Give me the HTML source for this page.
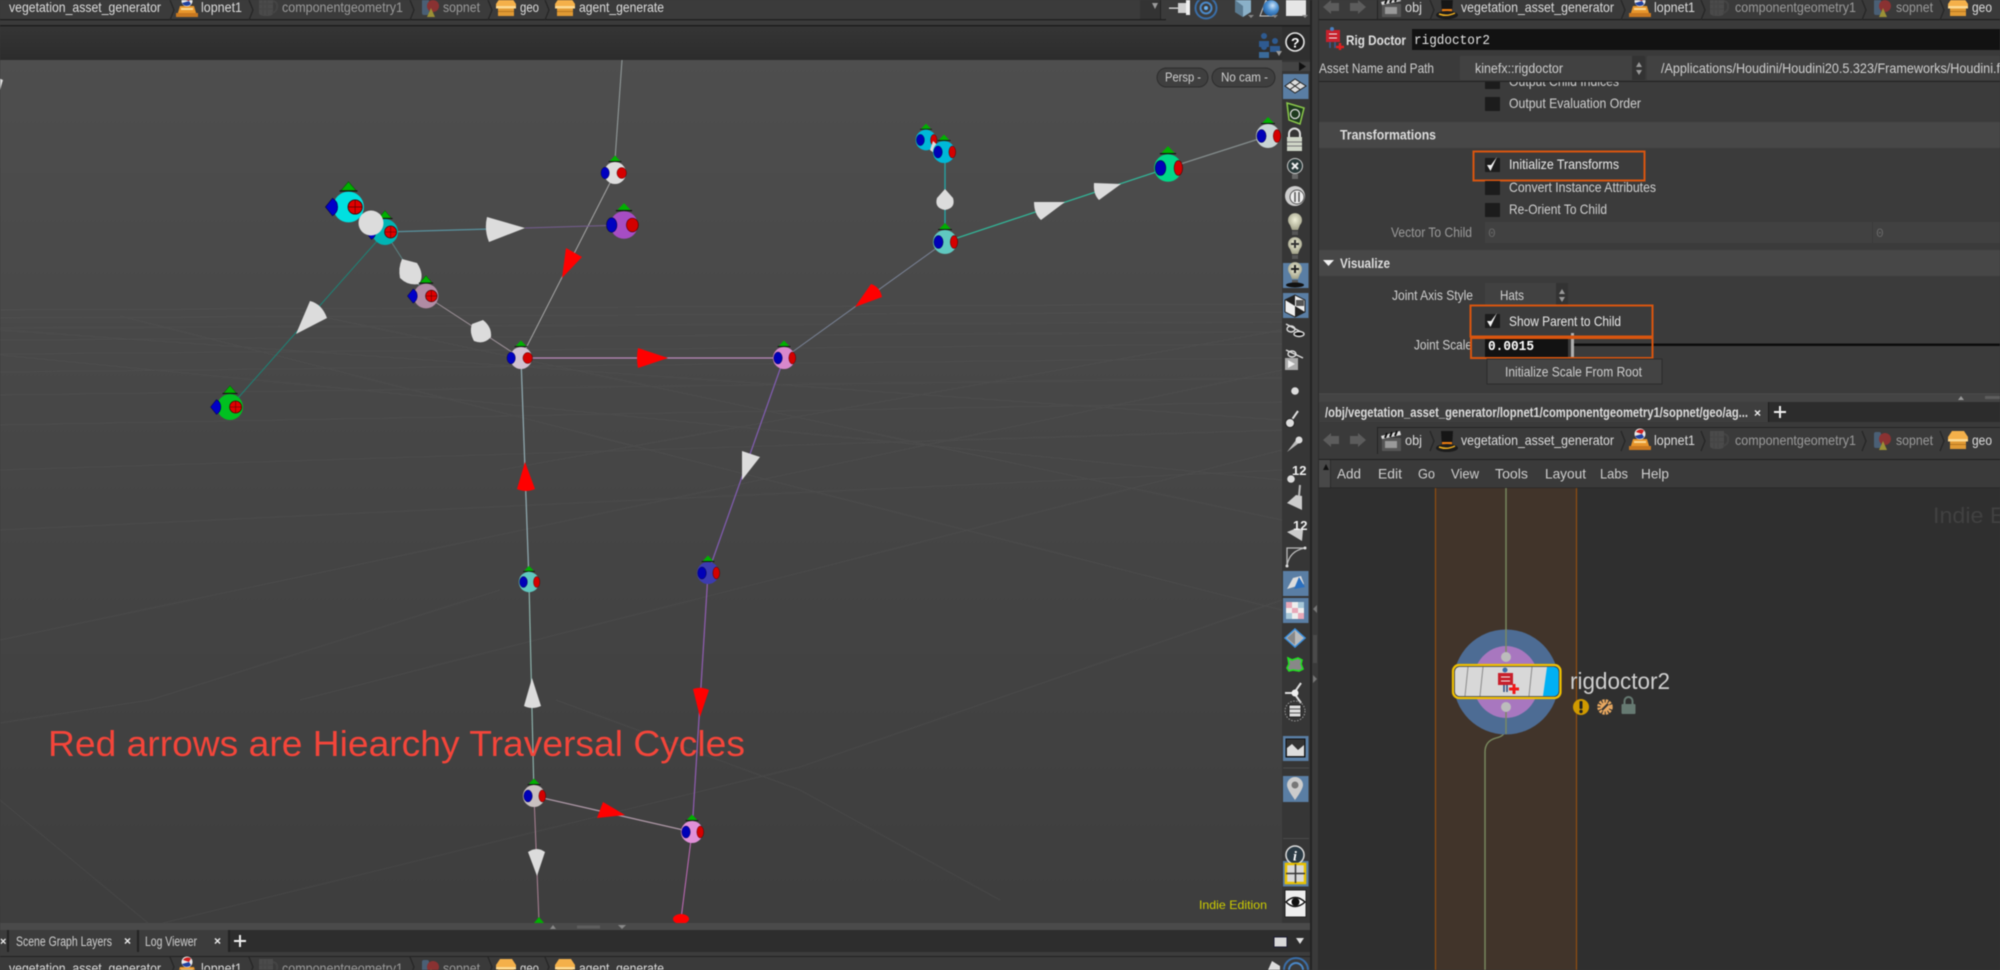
<!DOCTYPE html>
<html><head><meta charset="utf-8"><title>Rig Doctor</title>
<style>
html,body{margin:0;padding:0;background:#3a3a3a;width:2000px;height:970px;overflow:hidden}
body>svg{display:block;position:absolute;left:0;top:0;filter:blur(.45px)}
text{font-family:"Liberation Sans",sans-serif;fill:#cfcfcf;font-size:14px}
.b{fill:#dcdcdc}.d{fill:#9a9a9a}.m{font-family:"Liberation Mono",monospace}
</style></head><body>
<svg width="2000" height="970" viewBox="0 0 2000 970" xmlns="http://www.w3.org/2000/svg">
<defs>
<linearGradient id="vp" x1="0" y1="0" x2="0" y2="1"><stop offset="0" stop-color="#4e4e4e"/><stop offset=".35" stop-color="#484848"/><stop offset="1" stop-color="#3e3e3e"/></linearGradient>
<linearGradient id="tb" x1="0" y1="0" x2="0" y2="1"><stop offset="0" stop-color="#353535"/><stop offset="1" stop-color="#2c2c2c"/></linearGradient>
<radialGradient id="bulb" cx=".5" cy=".4" r=".6"><stop offset="0" stop-color="#f0f0d8"/><stop offset="1" stop-color="#a0a088"/></radialGradient>
<radialGradient id="sph" cx=".6" cy=".35" r=".7"><stop offset="0" stop-color="#cfe4f8"/><stop offset=".5" stop-color="#4a8ed0"/><stop offset="1" stop-color="#1f5a9a"/></radialGradient>
<!-- joint variants: radius 12 units -->
<g id="ja">
<path d="M-6-12.800L0-19.800 6-12.800Z" fill="#00b000" stroke="#0a5a0a" stroke-width=".5"/>
<path d="M-7-12.500H7" stroke="#111" stroke-width="1"/>
<circle r="12" fill="currentColor"/>
<path d="M-18 0L-12.500-6.800Q-8.500-4.500-8.500 0Q-8.500 4.500-12.500 6.800Z" fill="#0000c8" stroke="#000050" stroke-width=".5"/>
<circle cx="5.200" r="5.600" fill="#e00000" stroke="#300" stroke-width=".6"/>
<path d="M-.400 0H10.800M5.200-5.600V5.600" stroke="#500" stroke-width=".5"/>
</g>
<g id="jc">
<path d="M-6-12.800L0-19 6-12.800Z" fill="#00b000"/>
<path d="M-7-12.500H7" stroke="#111" stroke-width="1"/>
<circle r="12" fill="currentColor"/>
<ellipse cx="-10.700" rx="4.500" ry="6.300" fill="#0000c0" stroke="#000040" stroke-width=".5"/>
<ellipse cx="7.300" rx="5.200" ry="6" fill="#d40000" stroke="#400" stroke-width=".5"/>
</g>
<g id="jb">
<path d="M-6-12.800L0-19 6-12.800Z" fill="#00b000"/>
<path d="M-7-12.500H7" stroke="#111" stroke-width="1"/>
<circle r="12" fill="currentColor"/>
<ellipse cx="-6.500" rx="4.600" ry="6.500" fill="#0000b8" stroke="#000040" stroke-width=".5"/>
<ellipse cx="9" rx="3.700" ry="6.500" fill="#d40000" stroke="#400" stroke-width=".5"/>
</g>
<!-- breadcrumb icons -->
<g id="igeo"><path d="M-10-3L-6-9H6L10-3V0H-10Z" fill="#f4b04a"/><rect x="-8" y="0" width="16" height="9" fill="#e09a34"/><rect x="-10" y="-1" width="20" height="2.500" fill="#fcd890"/><rect x="-8" y="4" width="16" height="1" fill="#b87820"/></g>
<g id="ilop"><path d="M-10 9L-7-1H7L10 9Z" fill="#e8962c"/><rect x="-11" y="6" width="22" height="4" fill="#c87820"/><rect x="-6" y="1" width="12" height="2" fill="#fbd890"/><circle cy="-6" r="5.500" fill="#e8e8e8"/><path d="M-4-8A5.500 5.500 0 0 1 4-9.500L2-6Z" fill="#d02020"/><path d="M-5-4A5.500 5.500 0 0 0 4-3L2-6Z" fill="#2040a0"/></g>
<g id="imug"><path d="M-8-9H6V6Q6 9 0 9Q-8 9-8 6Z" fill="#4a4a4a"/><path d="M6-6Q11-5 10 1Q9 5 5 6" fill="none" stroke="#444" stroke-width="2"/><path d="M-4-8V8M0-8V8M-8-3H6M-8 2H6" stroke="#444"/></g>
<g id="isop"><rect x="-8" y="-8" width="7" height="16" rx="2" fill="#4a5f75"/><circle cx="3" cy="-1" r="6" fill="#8a3232"/><path d="M-3 10L1 1 5 10Z" fill="#9a9036"/></g>
<g id="iobj"><rect x="-9" y="-3" width="19" height="13" fill="#555"/><path d="M-10-5L9-10 10-6-9-2Z" fill="#ddd"/><path d="M-6-3L-4-8M-1-4L1-9M4-5L6-10" stroke="#111" stroke-width="2"/><rect x="-6" y="0" width="12" height="7" fill="#999"/></g>
<g id="ihat"><path d="M-5-10H7L6 7H-4Z" fill="#161616"/><path d="M-4 1H6L6 5H-4Z" fill="#e87a10"/><ellipse cx="1" cy="7" rx="11" ry="4" fill="#1c1c1c"/><path d="M-7 6Q1 9 9 5" stroke="#f0b020" fill="none" stroke-width="1.500"/></g>
<g id="lbulb"><path d="M-5 1A7 7 0 1 1 5 1L3 6H-3Z" fill="url(#bulb)"/><rect x="-3" y="7" width="6" height="4" fill="#555"/></g>
<path id="chev" d="M0 0L4 10 0 20" fill="none" stroke="#262626" stroke-width="1.300"/>
<path id="chk" d="M-5 0L-1.500 6 5-8-1 0Z" fill="#f0f0f0"/>
</defs>

<!-- base -->
<rect width="2000" height="970" fill="#3a3a3a"/>
<rect x="0" y="0" width="1310" height="20" fill="#3b3b3b"/>
<rect x="0" y="19" width="1166" height="1.300" fill="#1f1f1f"/>
<rect x="1160" y="0" width="1" height="19" fill="#222"/>
<rect x="1140" y="0" width="20" height="19" fill="#333"/>
<rect x="0" y="25" width="1310" height="1.500" fill="#1e1e1e"/>
<rect x="0" y="26.500" width="1282" height="33.500" fill="url(#tb)"/>
<rect x="1282" y="26.500" width="28" height="33.500" fill="#2f2f2f"/>

<!-- viewport -->
<rect x="0" y="60" width="1282" height="863" fill="url(#vp)"/>
<g stroke="#5a5a5a" stroke-width="1" fill="none" opacity=".3">
<path d="M0 723L150 700 500 590M0 800L148 923M163 923L800 767 1282 600M556 700L800 790 1000 900"/>
<path d="M0 310L1282 304M0 318L1282 312M0 328L1282 322M0 340L1282 332M0 354L1282 344M0 372L1282 358M0 395L1282 378M0 425L1282 402M0 470L1282 430M0 530L1282 470"/>
<path d="M0 330L1282 420M0 355L1282 480M120 316L1282 610M300 312L1282 520M1282 330L500 470M1282 370L0 640M1282 450L300 700"/>
</g>
<!-- skeleton lines -->
<g fill="none" stroke-width="1" opacity=".9">
<path d="M622 60L615 160" stroke="#9fa8a8"/>
<path d="M615 173L521 358" stroke="#b0b0b0"/>
<path d="M624 225L525 228" stroke="#7a5f98"/>
<path d="M490 229L385 232" stroke="#5a9aa8" stroke-width="1.300"/>
<path d="M385 232L230 407" stroke="#188a7c"/>
<path d="M385 232L426 296" stroke="#5f8a8a"/>
<path d="M426 296L521 358" stroke="#a89aa2"/>
<path d="M521 358L784 358" stroke="#c890c8" stroke-width="1.300"/>
<path d="M784 358L708 573" stroke="#8a60c0" stroke-width="1.200"/>
<path d="M708 573L692 832" stroke="#9a60c0" stroke-width="1.200"/>
<path d="M692 832L681 919" stroke="#d070c8"/>
<path d="M521 358L529 582" stroke="#9ab8c0" stroke-width="1.200"/>
<path d="M529 582L534 796" stroke="#9ac8c0" stroke-width="1.100"/>
<path d="M534 796L692 832" stroke="#b8a0b0" stroke-width="1.300"/>
<path d="M534 796L539 922" stroke="#b88aa0"/>
<path d="M945 242L784 358" stroke="#7f8aa0"/>
<path d="M945 152V242" stroke="#20b0b0" stroke-width="1.300"/>
<path d="M945 242L1168 168" stroke="#30c0a0" stroke-width="1.300"/>
<path d="M1168 168L1268 136" stroke="#8a9494" stroke-width="1.300"/>
</g>
<!-- arrows -->
<g fill="#dcdcdc">
<path d="M525 228L487 217Q484 230 489 242Z"/>
<path d="M296 334L310 301Q322 304 327 318Z"/>
<path d="M402 259L417 263Q425 275 419 284Q408 286 400 278Q398 268 402 259Z"/>
<path d="M483 320Q492 327 491 337Q484 345 474 341Q469 332 472 324Z"/>
<path d="M742 451L760 457 742 480Z"/>
<path d="M532 678L524 706Q532 710 541 706Z"/>
<path d="M537 876L528 852Q537 846 545 852Z"/>
<path d="M945 189L953 198Q956 208 945 210Q934 208 937 198Z"/>
<path d="M1065 202L1034 202Q1034 214 1041 220Z"/>
<path d="M1121 184L1094 183Q1093 194 1099 200Z"/>
</g>
<g fill="#ff0000">
<path d="M562 278L566 248 582 257Z"/>
<path d="M668 358L638 348Q636 358 638 368Z"/>
<path d="M525 462L517 489Q526 493 535 489Z"/>
<path d="M700 717L693 689Q701 686 709 690Z"/>
<path d="M625 815L603 802 597 818Z"/>
<path d="M855 307L871 284Q880 287 882 297Z"/>
<ellipse cx="681" cy="919" rx="8" ry="5"/>
</g>
<path d="M539 917L544 923H534Z" fill="#00b000"/>
<!-- joints -->
<use href="#ja" transform="translate(348.500 207) scale(1.280)" color="#00e0e0"/>
<use href="#ja" transform="translate(385 232) scale(1.080)" color="#00b4b4"/>
<circle cx="371" cy="223" r="12.500" fill="#dcdcdc"/>
<use href="#jc" transform="translate(615 173) scale(.92)" color="#dcdcdc"/>
<use href="#jc" transform="translate(624 225) scale(1.150)" color="#a64dc4"/>
<use href="#ja" transform="translate(426 296) scale(1.030)" color="#b08ca4"/>
<use href="#ja" transform="translate(230 407) scale(1.080)" color="#00c020"/>
<use href="#jc" transform="translate(521 358) scale(.92)" color="#d0c0d0"/>
<use href="#jb" transform="translate(784 358) scale(.92)" color="#d888cc"/>
<use href="#jb" transform="translate(926 140) scale(.86)" color="#00b8d8"/>
<path d="M933 141L945 152 938 156 930 150Z" fill="#dcdcdc"/>
<use href="#jb" transform="translate(944 152) scale(.92)" color="#00b8d8"/>
<use href="#jb" transform="translate(945 242) scale(1)" color="#60c8c0"/>
<use href="#jb" transform="translate(1168 168) scale(1.150)" color="#00d888"/>
<use href="#jb" transform="translate(1268 136) scale(1)" color="#c8d4d4"/>
<use href="#jb" transform="translate(529 582) scale(.85)" color="#60c8c0"/>
<use href="#jb" transform="translate(708 573) scale(.92)" color="#3c3cb0"/>
<use href="#jb" transform="translate(534 796) scale(.92)" color="#c8c0c0"/>
<use href="#jb" transform="translate(692 832) scale(.92)" color="#e090d8"/>

<text x="48" y="756" style="font-size:36px;fill:#f4453a" textLength="697" lengthAdjust="spacingAndGlyphs">Red arrows are Hiearchy Traversal Cycles</text>
<text x="1199" y="909" style="font-size:12px;fill:#cccc00" textLength="68" lengthAdjust="spacingAndGlyphs">Indie Edition</text>

<!-- persp buttons -->
<rect x="1157" y="68" width="51" height="19" rx="9.500" fill="#3f3f3f" stroke="#2c2c2c"/>
<text x="1165" y="81.500" style="font-size:13px" textLength="36" lengthAdjust="spacingAndGlyphs">Persp -</text>
<rect x="1212" y="68" width="63" height="19" rx="9.500" fill="#3f3f3f" stroke="#2c2c2c"/>
<text x="1221" y="81.500" style="font-size:13px" textLength="47" lengthAdjust="spacingAndGlyphs">No cam -</text>
<path d="M0 82L5 84 2 94Z" fill="#ddd" transform="translate(-2 -4)"/>

<!-- top breadcrumb left -->
<g>
<text x="9" y="12" class="b" textLength="152" lengthAdjust="spacingAndGlyphs">vegetation_asset_generator</text>
<use href="#chev" x="170" y="0"/>
<use href="#ilop" x="187" y="7"/>
<text x="201" y="12" class="b" textLength="41" lengthAdjust="spacingAndGlyphs">lopnet1</text>
<use href="#chev" x="249" y="0"/>
<use href="#imug" x="267" y="7"/>
<text x="282" y="12" class="d" textLength="121" lengthAdjust="spacingAndGlyphs">componentgeometry1</text>
<use href="#chev" x="410" y="0"/>
<use href="#isop" x="430" y="7"/>
<text x="443" y="12" class="d" textLength="37" lengthAdjust="spacingAndGlyphs">sopnet</text>
<use href="#chev" x="488" y="0"/>
<use href="#igeo" x="506" y="7"/>
<text x="520" y="12" class="b" textLength="19" lengthAdjust="spacingAndGlyphs">geo</text>
<use href="#chev" x="545" y="0"/>
<use href="#igeo" x="565" y="7"/>
<text x="579" y="12" class="b" textLength="85" lengthAdjust="spacingAndGlyphs">agent_generate</text>
</g>
<path d="M1152 3H1158L1155 9Z" fill="#9a9a9a"/>
<!-- top right icons -->
<path d="M1169 7.500H1178V8.800H1169Z" fill="#ddd"/><rect x="1178" y="3" width="8" height="10" fill="#cfcfcf"/><rect x="1186" y="0" width="4" height="15" fill="#eee"/>
<circle cx="1206" cy="8" r="10.500" fill="none" stroke="#3a6ea8" stroke-width="2"/><circle cx="1206" cy="8" r="5.500" fill="none" stroke="#4a88c8" stroke-width="2"/><circle cx="1206" cy="8" r="2" fill="#6ab0f0"/>
<path d="M1235 0H1251V12L1243 17 1235 12Z" fill="#8ab0c8"/><path d="M1243 6V17L1235 12V0Z" fill="#5a7a90"/>
<path d="M1260 16L1266 0 1274 16Z" fill="none" stroke="#ccc"/><circle cx="1271" cy="8" r="8" fill="url(#sph)"/>
<rect x="1286" y="0" width="20" height="16" fill="#e6e6e6"/>
<path d="M1248 15H1254L1251 18ZM1272 15H1278L1275 18ZM1302 15H1308L1305 18Z" fill="#888"/>
<!-- viewport toolbar icons -->
<g fill="#2e5a90"><circle cx="1264" cy="36" r="3"/><path d="M1259 47H1269V41H1259Z"/><circle cx="1275" cy="41" r="3"/><path d="M1270 52H1280V46H1270Z"/><circle cx="1264" cy="47" r="3"/><path d="M1259 58H1269V52H1259Z" fill="#3a6a9a"/></g>
<path d="M1276 51H1282L1279 56Z" fill="#999"/>
<circle cx="1295" cy="42" r="9" fill="#1d1d1d" stroke="#e6e6e6" stroke-width="1.600"/>
<text x="1291" y="47.500" style="font-size:14px;font-weight:bold;fill:#fff">?</text>

<!-- right toolbar -->
<rect x="1282" y="60" width="28" height="863" fill="#363636"/>
<rect x="1282" y="62" width="28" height="9" fill="#444"/>
<path d="M1299 62L1306 66.500 1299 71Z" fill="#111"/>
<rect x="1310" y="0" width="2" height="970" fill="#232323"/>
<rect x="1312" y="0" width="7" height="970" fill="#3a3a3a"/>
<rect x="1318" y="0" width="1" height="970" fill="#2c2c2c"/>
<g fill="#5a7ea4">
<rect x="1283" y="74" width="25.500" height="25"/>
<rect x="1283" y="263" width="25.500" height="25"/>
<rect x="1283" y="293" width="25.500" height="25"/>
<rect x="1283" y="571" width="25.500" height="25"/>
<rect x="1283" y="598" width="25.500" height="25"/>
<rect x="1283" y="736" width="25.500" height="25"/>
<rect x="1283" y="776" width="25.500" height="26"/>
<rect x="1283" y="861" width="25.500" height="25.500"/>
</g>
<path d="M1285 86L1295 79 1306 86 1295 93Z" fill="#ddd" stroke="#222"/><path d="M1290 82.500L1300 89.500M1300 82.500L1290 89.500" stroke="#222"/>
<path d="M1287 103L1304 108 1300 124 1289 120Z" fill="#1e3a1e" stroke="#8ac84a" stroke-width="1.500"/><circle cx="1295" cy="114" r="4.500" fill="none" stroke="#ddd" stroke-width="1.300"/>
<path d="M1289 138V134A5.500 5.500 0 0 1 1300 134V138" fill="none" stroke="#ddd" stroke-width="2"/><rect x="1287" y="137" width="15" height="14" fill="#cfd6c8"/><path d="M1287 142H1302M1287 146H1302" stroke="#777"/>
<circle cx="1295" cy="166" r="7.500" fill="#2a3a3a" stroke="#ccc"/><path d="M1292 163L1298 169M1298 163L1292 169" stroke="#eee" stroke-width="2"/><rect x="1292" y="174" width="6" height="5" fill="#666"/>
<circle cx="1295" cy="196" r="10" fill="#ccc"/><circle cx="1297" cy="197" r="7" fill="#eee" stroke="#555"/><path d="M1295 192V202M1299 192V202" stroke="#555" stroke-width="1.500"/>
<use href="#lbulb" x="1295" y="224"/>
<use href="#lbulb" x="1295" y="248"/><path d="M1295 240V248M1291 244H1299" stroke="#333" stroke-width="2"/>
<use href="#lbulb" x="1295" y="273"/><path d="M1295 265V273M1291 269H1299" stroke="#222" stroke-width="2"/><ellipse cx="1295" cy="285" rx="9" ry="2.500" fill="#111"/>
<path d="M1285 300L1295 295 1305 300V312L1295 317 1285 312Z" fill="#eee" stroke="#222"/><path d="M1295 295V306L1285 300ZM1295 306L1305 312 1295 317Z" fill="#222"/><rect x="1296" y="300" width="8" height="6" fill="#555"/>
<g fill="none" stroke="#ddd" stroke-width="1.400"><path d="M1286 324L1303 333"/><ellipse cx="1291" cy="329" rx="4" ry="3"/><ellipse cx="1299" cy="334" rx="5" ry="2.500" fill="#111"/><path d="M1286 350L1303 358"/><ellipse cx="1292" cy="354" rx="4" ry="3"/></g>
<rect x="1285" y="358" width="13" height="12" fill="#aaa"/><path d="M1288 360L1295 364 1288 368Z" fill="#eee"/>
<circle cx="1295" cy="391" r="3.800" fill="#ddd"/>
<path d="M1298 411L1291 421" stroke="#ddd" stroke-width="2"/><circle cx="1290" cy="423" r="4.500" fill="#ddd" stroke="#222"/>
<path d="M1287 452L1296 440 1299 443Z" fill="#bbb"/><circle cx="1299" cy="440" r="3.500" fill="#ddd"/>
<circle cx="1291" cy="479" r="3.800" fill="#ddd"/><text x="1292" y="475" style="font-size:13px;font-weight:bold;fill:#eee">12</text>
<path d="M1287 503L1296 495 1302 496 1302 510Z" fill="#ccc"/><path d="M1299 496L1300 485" stroke="#bbb" stroke-width="2"/>
<path d="M1287 532L1297 528 1303 530 1302 541Z" fill="#ccc"/><text x="1293" y="530" style="font-size:13px;font-weight:bold;fill:#eee">12</text>
<path d="M1287 566V548H1305M1287 566Q1289 551 1305 548" fill="none" stroke="#bbb" stroke-width="1.300"/><circle cx="1287" cy="566" r="1.500" fill="#ddd"/><circle cx="1305" cy="548" r="1.500" fill="#ddd"/>
<path d="M1287 589L1293 578 1301 576 1304 584Z" fill="#dcdcdc"/><path d="M1299 577L1305 587 1294 589Z" fill="#2a70c0"/>
<g><rect x="1286" y="602" width="18" height="17" fill="#eee"/><rect x="1286" y="602" width="6" height="6" fill="#e8a8b8"/><rect x="1298" y="602" width="6" height="6" fill="#a8c8d8"/><rect x="1292" y="608" width="6" height="5" fill="#e8a8b8"/><rect x="1286" y="613" width="6" height="6" fill="#a8c8d8"/><rect x="1298" y="613" width="6" height="6" fill="#e8a8b8"/></g>
<path d="M1295 629L1305 638 1295 647 1285 638Z" fill="#bbb" stroke="#3a90e0" stroke-width="1.500"/><path d="M1295 631L1295 645 1287 638Z" fill="#888"/>
<path d="M1288 658L1292 660 1298 658 1302 660 1301 664 1303 669 1299 671 1293 670 1289 671 1287 668 1289 664Z" fill="#888" stroke="#20e020" stroke-width="1.600"/>
<path d="M1294 693L1301 683M1294 693L1301 703M1294 693H1285" stroke="#ddd" stroke-width="2"/><circle cx="1295" cy="693" r="3.500" fill="#eee"/>
<circle cx="1295" cy="711" r="10" fill="none" stroke="#999" stroke-dasharray="1.500 1.500"/><rect x="1289" y="705" width="12" height="12" fill="#ddd" stroke="#222"/><path d="M1289 709H1301M1289 713H1301" stroke="#555"/>
<rect x="1286" y="739" width="19" height="18" fill="#333" stroke="#111"/><path d="M1287 756V748L1292 744 1298 750 1304 745V756Z" fill="#ddd"/>
<rect x="1283" y="767.500" width="26" height="1" fill="#4a4a4a"/>
<path d="M1295 800Q1287 789 1287 785A8 8 0 0 1 1303 785Q1303 789 1295 800Z" fill="#ccc"/><circle cx="1295" cy="785" r="3.500" fill="#777"/>
<rect x="1283" y="838" width="26" height="1" fill="#4a4a4a"/>
<circle cx="1295" cy="855" r="9" fill="#2a3a44" stroke="#ddd" stroke-width="1.500"/>
<text x="1293" y="860.500" style="font-size:14px;font-style:italic;font-weight:bold;font-family:'Liberation Serif',serif;fill:#fff">i</text>
<rect x="1286" y="864" width="19" height="19" fill="#d8d8d8" stroke="#e8c000" stroke-width="2.500"/><path d="M1295.500 864V883M1286 873.500H1305" stroke="#333" stroke-width="1.500"/>
<rect x="1285" y="890" width="21" height="27" fill="#eee" stroke="#222"/><path d="M1286 902Q1295 893 1305 902Q1295 911 1286 902Z" fill="#fff" stroke="#111" stroke-width="1.500"/><circle cx="1295.500" cy="902" r="4" fill="#111"/>

<!-- sash small arrows -->
<path d="M1313 609L1317 605V613Z" fill="#777"/><path d="M1317 679L1313 675V683Z" fill="#777"/>
<rect x="1313" y="635" width="4" height="28" fill="#4a4a4a"/>

<!-- bottom left tabs -->
<rect x="0" y="923" width="1310" height="7" fill="#4a4a4a"/>
<path d="M553 925L556 929H550ZM618 925H626L622 929Z" fill="#888"/><rect x="577" y="925.500" width="23" height="3" fill="#5e5e5e"/>
<rect x="0" y="930" width="1310" height="22" fill="#2d2d2d"/>
<rect x="0" y="930" width="230" height="22" fill="#3c3c3c"/>
<rect x="7" y="930" width="2" height="22" fill="#222"/><rect x="137" y="930" width="2" height="22" fill="#222"/><rect x="228" y="930" width="2" height="22" fill="#222"/>
<text x="0" y="945" style="font-size:11px;font-weight:bold;fill:#eee">×</text>
<text x="16" y="946" style="font-size:13.500px" textLength="96" lengthAdjust="spacingAndGlyphs">Scene Graph Layers</text>
<text x="124" y="945" style="font-size:12px;font-weight:bold;fill:#eee">×</text>
<text x="145" y="946" style="font-size:13.500px" textLength="52" lengthAdjust="spacingAndGlyphs">Log Viewer</text>
<text x="214" y="945" style="font-size:12px;font-weight:bold;fill:#eee">×</text>
<path d="M240 935V947M234 941H246" stroke="#eee" stroke-width="2"/>
<rect x="1274" y="937" width="13" height="10" fill="#d8d8d8" stroke="#1a1a30"/>
<path d="M1296 938H1304L1300 944Z" fill="#ddd"/>
<rect x="0" y="952" width="1310" height="4" fill="#3c3c3c"/><rect x="0" y="956" width="1310" height="1" fill="#222"/>
<!-- bottom breadcrumb -->
<text x="9" y="973" class="b" textLength="152" lengthAdjust="spacingAndGlyphs">vegetation_asset_generator</text>
<use href="#chev" x="170" y="957"/><use href="#ilop" x="187" y="968"/>
<text x="201" y="973" class="b" textLength="41" lengthAdjust="spacingAndGlyphs">lopnet1</text>
<use href="#chev" x="249" y="957"/><use href="#imug" x="267" y="968"/>
<text x="282" y="973" class="d" textLength="121" lengthAdjust="spacingAndGlyphs">componentgeometry1</text>
<use href="#chev" x="410" y="957"/><use href="#isop" x="430" y="968"/>
<text x="443" y="973" class="d" textLength="37" lengthAdjust="spacingAndGlyphs">sopnet</text>
<use href="#chev" x="488" y="957"/><use href="#igeo" x="506" y="968"/>
<text x="520" y="973" class="b" textLength="19" lengthAdjust="spacingAndGlyphs">geo</text>
<use href="#chev" x="545" y="957"/><use href="#igeo" x="565" y="968"/>
<text x="579" y="973" class="b" textLength="85" lengthAdjust="spacingAndGlyphs">agent_generate</text>
<circle cx="1296" cy="970" r="12" fill="none" stroke="#3a6ea8" stroke-width="2"/><circle cx="1296" cy="970" r="7" fill="none" stroke="#4a88c8" stroke-width="2"/>
<path d="M1268 970L1272 961 1280 966V970Z" fill="#ddd"/>

<!-- ===== PARAM PANE ===== -->
<rect x="1319" y="0" width="681" height="394" fill="#3b3b3b"/>
<rect x="1377" y="0" width="623" height="19" fill="#3a3a3a"/>
<rect x="1319" y="19" width="681" height="1.300" fill="#1f1f1f"/>
<rect x="1319" y="20.300" width="681" height="61" fill="#3a3a3a"/>
<rect x="1377" y="0" width="1" height="19" fill="#222"/>
<g fill="#5c5c5c"><path d="M1323 7L1331 0V3H1339V11H1331V14Z"/><path d="M1366 7L1358 0V3H1350V11H1358V14Z"/></g>
<use href="#iobj" x="1391" y="7"/>
<text x="1405" y="12" class="b" textLength="17" lengthAdjust="spacingAndGlyphs">obj</text>
<use href="#chev" x="1430" y="0"/><use href="#ihat" x="1446" y="8"/>
<text x="1461" y="12" class="b" textLength="153" lengthAdjust="spacingAndGlyphs">vegetation_asset_generator</text>
<use href="#chev" x="1621" y="0"/><use href="#ilop" x="1640" y="7"/>
<text x="1654" y="12" class="b" textLength="41" lengthAdjust="spacingAndGlyphs">lopnet1</text>
<use href="#chev" x="1701" y="0"/><use href="#imug" x="1718" y="7"/>
<text x="1735" y="12" class="d" textLength="121" lengthAdjust="spacingAndGlyphs">componentgeometry1</text>
<use href="#chev" x="1862" y="0"/><use href="#isop" x="1882" y="7"/>
<text x="1896" y="12" class="d" textLength="37" lengthAdjust="spacingAndGlyphs">sopnet</text>
<use href="#chev" x="1940" y="0"/><use href="#igeo" x="1958" y="7"/>
<text x="1972" y="12" class="b" textLength="20" lengthAdjust="spacingAndGlyphs">geo</text>

<!-- Rig doctor header -->
<rect x="1326" y="30" width="14" height="12" fill="#c8202c"/><path d="M1329 34H1337M1329 38H1337" stroke="#eee"/><circle cx="1332" cy="29" r="2" fill="#4a80c0"/><path d="M1330 42V48M1335 42V48" stroke="#3a5a90" stroke-width="1.500"/><path d="M1340 43V50M1336 47H1344" stroke="#e02020" stroke-width="2.500"/>
<text x="1346" y="45" style="font-size:14px;font-weight:bold;fill:#e0e0e0" textLength="60" lengthAdjust="spacingAndGlyphs">Rig Doctor</text>
<rect x="1412" y="29" width="588" height="21" fill="#121212"/>
<text x="1414" y="44" class="m" style="font-size:14px;fill:#e4e4e4" textLength="76" lengthAdjust="spacingAndGlyphs">rigdoctor2</text>
<text x="1319" y="73" style="font-size:14px" textLength="115" lengthAdjust="spacingAndGlyphs">Asset Name and Path</text>
<rect x="1460" y="56" width="172" height="24" fill="#414141"/>
<rect x="1632" y="56" width="13" height="24" fill="#333"/>
<path d="M1639 62L1642 67H1636ZM1639 75L1636 70H1642Z" fill="#999"/>
<rect x="1647" y="56" width="353" height="24" fill="#414141"/>
<text x="1475" y="73" style="font-size:14px" textLength="88" lengthAdjust="spacingAndGlyphs">kinefx::rigdoctor</text>
<text x="1661" y="73" style="font-size:14px" textLength="339" lengthAdjust="spacingAndGlyphs">/Applications/Houdini/Houdini20.5.323/Frameworks/Houdini.f</text>
<rect x="1319" y="81" width="681" height="1" fill="#222"/>

<!-- clipped row -->
<svg x="1319" y="82" width="681" height="12" viewBox="1319 82 681 12"><rect x="1485" y="75" width="15" height="14" fill="#1c1c1c"/><text x="1509" y="86" style="font-size:14px" textLength="110" lengthAdjust="spacingAndGlyphs">Output Child Indices</text></svg>
<rect x="1485" y="97" width="15" height="14" fill="#1c1c1c"/>
<text x="1509" y="108" style="font-size:14px" textLength="132" lengthAdjust="spacingAndGlyphs">Output Evaluation Order</text>
<rect x="1319" y="122" width="681" height="26" fill="#474747"/>
<text x="1340" y="139.500" style="font-size:13.500px;font-weight:bold;fill:#ddd" textLength="96" lengthAdjust="spacingAndGlyphs">Transformations</text>

<rect x="1485" y="158" width="15" height="14" fill="#1c1c1c"/><use href="#chk" x="1492" y="165"/>
<text x="1509" y="169" style="font-size:14px;fill:#e8e8e8" textLength="110" lengthAdjust="spacingAndGlyphs">Initialize Transforms</text>
<rect x="1473.500" y="151.500" width="171" height="29" fill="none" stroke="#d8550f" stroke-width="2"/>
<rect x="1485" y="181" width="15" height="14" fill="#1c1c1c"/>
<text x="1509" y="192" style="font-size:14px" textLength="147" lengthAdjust="spacingAndGlyphs">Convert Instance Attributes</text>
<rect x="1485" y="203" width="15" height="14" fill="#1c1c1c"/>
<text x="1509" y="214" style="font-size:14px" textLength="98" lengthAdjust="spacingAndGlyphs">Re-Orient To Child</text>
<text x="1391" y="237" class="d" style="font-size:14px" textLength="81" lengthAdjust="spacingAndGlyphs">Vector To Child</text>
<rect x="1485" y="222" width="387" height="21" fill="#414141"/>
<rect x="1873" y="222" width="127" height="21" fill="#414141"/>
<text x="1488" y="237" class="m" style="font-size:13px;fill:#666">0</text>
<text x="1876" y="237" class="m" style="font-size:13px;fill:#666">0</text>

<rect x="1319" y="250" width="681" height="26" fill="#474747"/>
<path d="M1323 260H1334L1328.500 266Z" fill="#f0f0f0"/>
<text x="1340" y="268" style="font-size:13.500px;font-weight:bold;fill:#ddd" textLength="50" lengthAdjust="spacingAndGlyphs">Visualize</text>

<text x="1392" y="300" style="font-size:14px" textLength="81" lengthAdjust="spacingAndGlyphs">Joint Axis Style</text>
<rect x="1485" y="283" width="71" height="22" fill="#414141"/>
<rect x="1556" y="283" width="12" height="22" fill="#333"/>
<path d="M1562 289L1565 294H1559ZM1562 302L1559 297H1565Z" fill="#999"/>
<text x="1500" y="300" style="font-size:14px" textLength="24" lengthAdjust="spacingAndGlyphs">Hats</text>

<rect x="1485" y="314" width="15" height="14" fill="#1c1c1c"/><use href="#chk" x="1492" y="321"/>
<text x="1509" y="326" style="font-size:14px;fill:#e8e8e8" textLength="112" lengthAdjust="spacingAndGlyphs">Show Parent to Child</text>

<text x="1414" y="349.500" style="font-size:14px" textLength="58" lengthAdjust="spacingAndGlyphs">Joint Scale</text>
<rect x="1485" y="336" width="83" height="22" fill="#121212"/>
<text x="1488" y="350" class="m" style="font-size:14px;font-weight:bold;fill:#fff" textLength="46" lengthAdjust="spacingAndGlyphs">0.0015</text>
<rect x="1573" y="343.500" width="427" height="2.500" fill="#0c0c0c"/>
<rect x="1571" y="333" width="3" height="24" fill="#b0b0b0"/>
<rect x="1470.500" y="305.500" width="182" height="31" fill="none" stroke="#d8550f" stroke-width="2"/>
<rect x="1471" y="338" width="181.500" height="20" fill="none" stroke="#d8550f" stroke-width="2"/>

<rect x="1487" y="359" width="175" height="25" fill="#434343" stroke="#2c2c2c"/>
<text x="1505" y="376.500" style="font-size:14px" textLength="137" lengthAdjust="spacingAndGlyphs">Initialize Scale From Root</text>
<rect x="1319" y="393.500" width="681" height="1" fill="#555"/>

<!-- ===== NETWORK PANE ===== -->
<rect x="1319" y="394" width="681" height="8" fill="#444"/>
<path d="M1961 396L1964 400H1958Z" fill="#999"/><rect x="1985" y="396" width="15" height="3" fill="#5e5e5e"/>
<rect x="1319" y="402" width="449" height="20" fill="#3e3e3e"/>
<rect x="1768" y="402" width="232" height="20" fill="#2c2c2c"/>
<rect x="1768" y="402" width="1" height="20" fill="#1c1c1c"/>
<text x="1325" y="417" style="font-size:13.500px;font-weight:bold;fill:#dcdcdc" textLength="423" lengthAdjust="spacingAndGlyphs">/obj/vegetation_asset_generator/lopnet1/componentgeometry1/sopnet/geo/ag...</text>
<text x="1754" y="417" style="font-size:12px;font-weight:bold;fill:#eee">×</text>
<path d="M1780 406V418M1774 412H1786" stroke="#eee" stroke-width="2"/>
<rect x="1319" y="422" width="681" height="66" fill="#3a3a3a"/>
<rect x="1377" y="427" width="623" height="1" fill="#242424"/>
<rect x="1377" y="427" width="1" height="27" fill="#242424"/>
<rect x="1319" y="459" width="681" height="1" fill="#1f1f1f"/>
<g fill="#5c5c5c"><path d="M1323 440L1331 433V436H1339V444H1331V447Z"/><path d="M1366 440L1358 433V436H1350V444H1358V447Z"/></g>
<use href="#iobj" x="1391" y="441"/>
<text x="1405" y="445" class="b" textLength="17" lengthAdjust="spacingAndGlyphs">obj</text>
<use href="#chev" x="1430" y="431"/><use href="#ihat" x="1446" y="441"/>
<text x="1461" y="445" class="b" textLength="153" lengthAdjust="spacingAndGlyphs">vegetation_asset_generator</text>
<use href="#chev" x="1621" y="431"/><use href="#ilop" x="1640" y="440"/>
<text x="1654" y="445" class="b" textLength="41" lengthAdjust="spacingAndGlyphs">lopnet1</text>
<use href="#chev" x="1701" y="431"/><use href="#imug" x="1718" y="440"/>
<text x="1735" y="445" class="d" textLength="121" lengthAdjust="spacingAndGlyphs">componentgeometry1</text>
<use href="#chev" x="1862" y="431"/><use href="#isop" x="1882" y="440"/>
<text x="1896" y="445" class="d" textLength="37" lengthAdjust="spacingAndGlyphs">sopnet</text>
<use href="#chev" x="1940" y="431"/><use href="#igeo" x="1958" y="440"/>
<text x="1972" y="445" class="b" textLength="20" lengthAdjust="spacingAndGlyphs">geo</text>
<rect x="1319" y="460" width="11" height="28" fill="#484848"/><rect x="1330" y="460" width="1" height="28" fill="#2a2a2a"/>
<path d="M1323 468L1326 462 1329 468Z" fill="#111" transform="translate(0 2)"/>
<g style="font-size:14px">
<text x="1337" y="478.500" textLength="24" lengthAdjust="spacingAndGlyphs">Add</text>
<text x="1378" y="478.500" textLength="24" lengthAdjust="spacingAndGlyphs">Edit</text>
<text x="1418" y="478.500" textLength="17" lengthAdjust="spacingAndGlyphs">Go</text>
<text x="1451" y="478.500" textLength="28" lengthAdjust="spacingAndGlyphs">View</text>
<text x="1495" y="478.500" textLength="33" lengthAdjust="spacingAndGlyphs">Tools</text>
<text x="1545" y="478.500" textLength="41" lengthAdjust="spacingAndGlyphs">Layout</text>
<text x="1600" y="478.500" textLength="28" lengthAdjust="spacingAndGlyphs">Labs</text>
<text x="1641" y="478.500" textLength="28" lengthAdjust="spacingAndGlyphs">Help</text>
</g>
<rect x="1319" y="487.500" width="681" height="1" fill="#1f1f1f"/>
<rect x="1319" y="488" width="681" height="482" fill="#2f2f2f"/>
<text x="1933" y="523" style="font-size:22px;fill:#414141" textLength="128" lengthAdjust="spacingAndGlyphs">Indie Edition</text>
<rect x="1435" y="488" width="142" height="482" fill="#41342a"/>
<path d="M1435.500 488V970M1576.500 488V970" stroke="#8c4c12" stroke-width="1.300"/>
<path d="M1506 488V650M1506 712V727Q1506 736 1496 738Q1485 741 1485 752V970" fill="none" stroke="#7a8a60" stroke-width="1.400"/>
<ellipse cx="1506" cy="682" rx="52.500" ry="52.500" fill="#4d6c94"/>
<ellipse cx="1506" cy="682" rx="33" ry="36" fill="#a877bf"/>
<path d="M1506 629V654M1506 712V734" fill="none" stroke="#7a8a60" stroke-width="1.400"/>
<circle cx="1506" cy="657" r="5" fill="#bcbcbc"/><circle cx="1506" cy="707" r="5" fill="#bcbcbc"/>
<rect x="1453" y="665" width="107.500" height="33" rx="6" fill="#d8d8d8" stroke="#f0c000" stroke-width="2.200"/>
<path d="M1547 667H1556Q1558.500 667 1558.500 670V693Q1558.500 696 1556 696H1543Z" fill="#00b0f4"/>
<path d="M1468 667L1465 696M1483 667L1480 696M1532 667L1529 696" stroke="#8a8a8a"/>
<rect x="1454.500" y="666.500" width="104.500" height="30" rx="5" fill="none" stroke="#333" stroke-width=".8"/>
<circle cx="1505" cy="670" r="2.500" fill="#3a6ea8"/><rect x="1498" y="673" width="15" height="12" fill="#c8202c"/><path d="M1501 677H1510M1501 681H1510" stroke="#eee"/><path d="M1504 685V692M1507 685V692" stroke="#2a4a80" stroke-width="1.500"/><path d="M1514 684V694M1509 689H1519" stroke="#f01818" stroke-width="3"/>
<text x="1570" y="689" style="font-size:23px;fill:#cfcfcf" textLength="100" lengthAdjust="spacingAndGlyphs">rigdoctor2</text>
<circle cx="1581" cy="707" r="8" fill="#d09a00"/><rect x="1579.500" y="701" width="3" height="8" rx="1" fill="#222"/><circle cx="1581" cy="711.500" r="1.700" fill="#222"/>
<circle cx="1605" cy="707" r="6" fill="none" stroke="#e8a860" stroke-width="3.500" stroke-dasharray="2.200 1"/><circle cx="1605" cy="707" r="4.500" fill="#e8a860"/><path d="M1602 710L1608 704" stroke="#333" stroke-width="2"/>
<rect x="1621.500" y="704" width="14" height="10" rx="1" fill="#667a72"/><path d="M1624.500 704V701A4 4 0 0 1 1632.500 701V704" fill="none" stroke="#667a72" stroke-width="2"/>
</svg>
</body></html>
